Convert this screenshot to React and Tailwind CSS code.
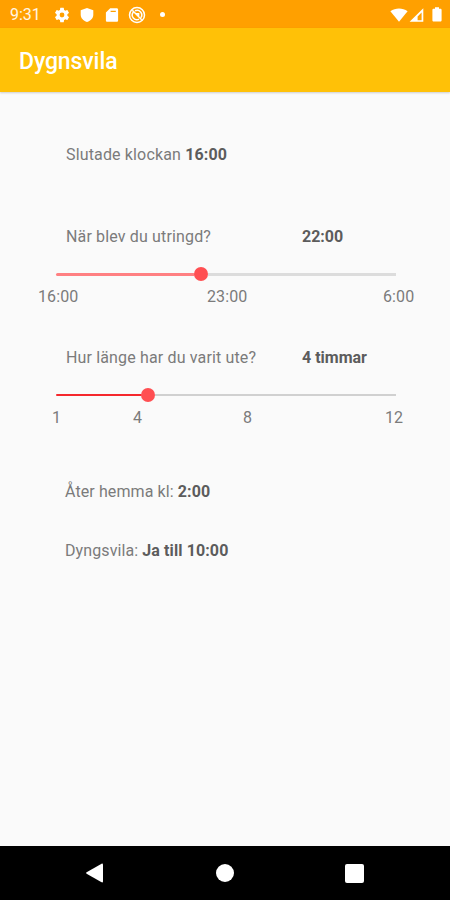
const startTicks = [
  { label: "16:00", width: "w-[169px]" },
  { label: "23:00", width: "w-[176px]" },
  { label: "6:00", width: "w-10" },
];

const hourTicks = [
  { label: "1", width: "w-[81px]" },
  { label: "4", width: "w-[110px]" },
  { label: "8", width: "w-[142px]" },
  { label: "12", width: "w-6" },
];

function StatusBar() {
  return (
    <div className="h-7 shrink-0 bg-[#ffa000] flex items-center justify-between pl-[10px] pr-2 pt-px text-white">
      <div className="flex items-center">
        <span className="w-[43px] pt-px text-base leading-5 text-white/90">9:31</span>
        <svg className="w-[18px] h-[18px]" viewBox="0 0 24 24" fill="currentColor">
          <path d="M19.14 12.94c.04-.3.06-.61.06-.94s-.02-.64-.07-.94l2.03-1.58a.49.49 0 0 0 .12-.61l-1.92-3.32a.49.49 0 0 0-.59-.22l-2.39.96a7 7 0 0 0-1.62-.94l-.36-2.54a.48.48 0 0 0-.48-.41h-3.84a.47.47 0 0 0-.47.41l-.36 2.54c-.59.24-1.13.57-1.62.94l-2.39-.96a.48.48 0 0 0-.59.22L2.74 8.87a.47.47 0 0 0 .12.61l2.03 1.58c-.05.3-.09.63-.09.94s.02.64.07.94l-2.03 1.58a.49.49 0 0 0-.12.61l1.92 3.32c.12.22.37.29.59.22l2.39-.96c.5.38 1.03.7 1.62.94l.36 2.54c.05.24.24.41.48.41h3.84c.24 0 .44-.17.47-.41l.36-2.54a6.8 6.8 0 0 0 1.62-.94l2.39.96c.22.08.47 0 .59-.22l1.92-3.32a.47.47 0 0 0-.12-.61zM12 15.2a3.2 3.2 0 1 1 0-6.4 3.2 3.2 0 0 1 0 6.4z" />
        </svg>
        <svg className="ml-2 w-4 h-4" viewBox="0 0 16 16" fill="currentColor">
          <path d="M8 1.100 14.300 3.300v4.500c0 3.300-2.400 5.900-6.300 7.200-3.900-1.300-6.300-3.900-6.300-7.200V3.300z" />
        </svg>
        <svg className="ml-[9px] w-4 h-4" viewBox="0 0 16 16" fill="currentColor">
          <path
            fillRule="evenodd"
            d="M6.200 1.200h6.500c.8 0 1.400.6 1.400 1.400v10.800c0 .8-.6 1.400-1.400 1.400H3.300c-.8 0-1.400-.6-1.400-1.400V5.500zM6.600 3.800v1.300h5.200V3.800z"
          />
        </svg>
        <svg
          className="ml-2 w-[18px] h-[18px]"
          viewBox="0 0 18 18"
          fill="none"
          stroke="currentColor"
          strokeWidth="1.500"
        >
          <circle cx="9" cy="9" r="7.500" />
          <path d="M5.200 6.200a4.700 4.700 0 0 0 5.900 7M7 4.800a4.700 4.700 0 0 1 5.900 6.900M4.300 4.300l9.400 9.400M8.200 7.700h2.400v2.200" />
        </svg>
        <span className="ml-[14px] w-[5px] h-[5px] rounded-full bg-white" />
      </div>
      <div className="flex items-center">
        <svg className="w-[18px] h-[14px]" viewBox="0 0 18 14" fill="currentColor">
          <path d="M.4 3.200C5.400-.5 12.600-.5 17.600 3.200L9 13.800z" />
        </svg>
        <svg className="ml-px w-[15px] h-[14px]" viewBox="0 0 15 14" fill="currentColor">
          <path fillRule="evenodd" d="M.6 13.700 14.300.2v13.500zM8.600 12.200h4V4.600l-4 3.900z" />
        </svg>
        <svg className="ml-2 w-[10px] h-[15px]" viewBox="0 0 10 15" fill="currentColor">
          <path d="M3 .3h4v1.400h1.300c.8 0 1.300.5 1.300 1.300v10.300c0 .8-.5 1.300-1.300 1.300H1.700c-.8 0-1.300-.5-1.300-1.300V3c0-.8.5-1.300 1.300-1.300H3z" />
        </svg>
      </div>
    </div>
  );
}

function Slider({ value, fill, track }) {
  return (
    <div className="ml-14 mr-[54px] h-4 flex items-center">
      <div className={`rounded-full ${fill}`} style={{ width: `${value}px` }} />
      <div className="-ml-px w-[14px] h-[14px] shrink-0 rounded-full bg-[#ff4f52]" />
      <div className={`flex-1 ${track}`} />
    </div>
  );
}

function Ticks({ items, className }) {
  return (
    <div className={`flex h-5 mt-[5px] tracking-[0.1px] ${className}`}>
      {items.map((t) => (
        <span key={t.label} className={`shrink-0 ${t.width}`}>
          {t.label}
        </span>
      ))}
    </div>
  );
}

function Question({ text, answer }) {
  return (
    <div className="flex h-5 pl-[66px]">
      <span className="w-[236px] tracking-[0.15px]">{text}</span>
      <b className="font-bold text-[#5c5c5c]">{answer}</b>
    </div>
  );
}

export default function App() {
  return (
    <div className="w-[450px] h-[900px] flex flex-col overflow-hidden bg-[#fafafa] font-[Roboto,sans-serif]">
      <StatusBar />
      <header className="h-16 shrink-0 flex items-center pl-[19px] bg-[#ffc107] text-white shadow-[0_1px_2px_rgba(0,0,0,0.18)]">
        <h1 className="pt-1 text-[23px] leading-7 font-medium tracking-[-0.1px]">Dygnsvila</h1>
      </header>

      <main className="flex-1 pt-[53px] text-base leading-5 text-[#7b7b7b] whitespace-nowrap">
        <p className="pl-[66px] h-5 tracking-[0.15px]">
          Slutade klockan <b className="font-bold text-[#5c5c5c]">16:00</b>
        </p>

        <section className="mt-[62px]">
          <Question text="När blev du utringd?" answer="22:00" />
          <div className="h-[19px]" />
          <Slider value={139} fill="h-[3px] bg-[#ff8082]" track="h-[3px] bg-[#dcdcdc]" />
          <Ticks items={startTicks} className="pl-[38px]" />
        </section>

        <section className="mt-[41px]">
          <Question text="Hur länge har du varit ute?" answer="4 timmar" />
          <div className="h-[19px]" />
          <Slider value={86} fill="h-[2px] bg-[#f5282d]" track="h-[2px] bg-[#d0d0d0]" />
          <Ticks items={hourTicks} className="pl-[52px]" />
        </section>

        <p className="mt-[54px] pl-[65px] h-5 tracking-[0.1px]">
          Åter hemma kl: <b className="font-bold text-[#5c5c5c]">2:00</b>
        </p>
        <p className="mt-[39px] pl-[65px] h-5 tracking-[0.1px]">
          Dyngsvila: <b className="font-bold text-[#5c5c5c]">Ja till 10:00</b>
        </p>
      </main>

      <nav className="h-[54px] shrink-0 flex items-center justify-between pl-[86px] pr-[86px] bg-black text-white">
        <svg className="w-[18px] h-5" viewBox="0 0 18 20" fill="currentColor">
          <path d="M.6 9.300 15.600.7c.7-.4 1.400 0 1.400.8v17c0 .8-.7 1.200-1.400.8L.6 10.700c-.6-.4-.6-1 0-1.400z" />
        </svg>
        <span className="w-[18px] h-[18px] rounded-full bg-white" />
        <span className="w-[19px] h-[19px] rounded-[2px] bg-white" />
      </nav>
    </div>
  );
}
